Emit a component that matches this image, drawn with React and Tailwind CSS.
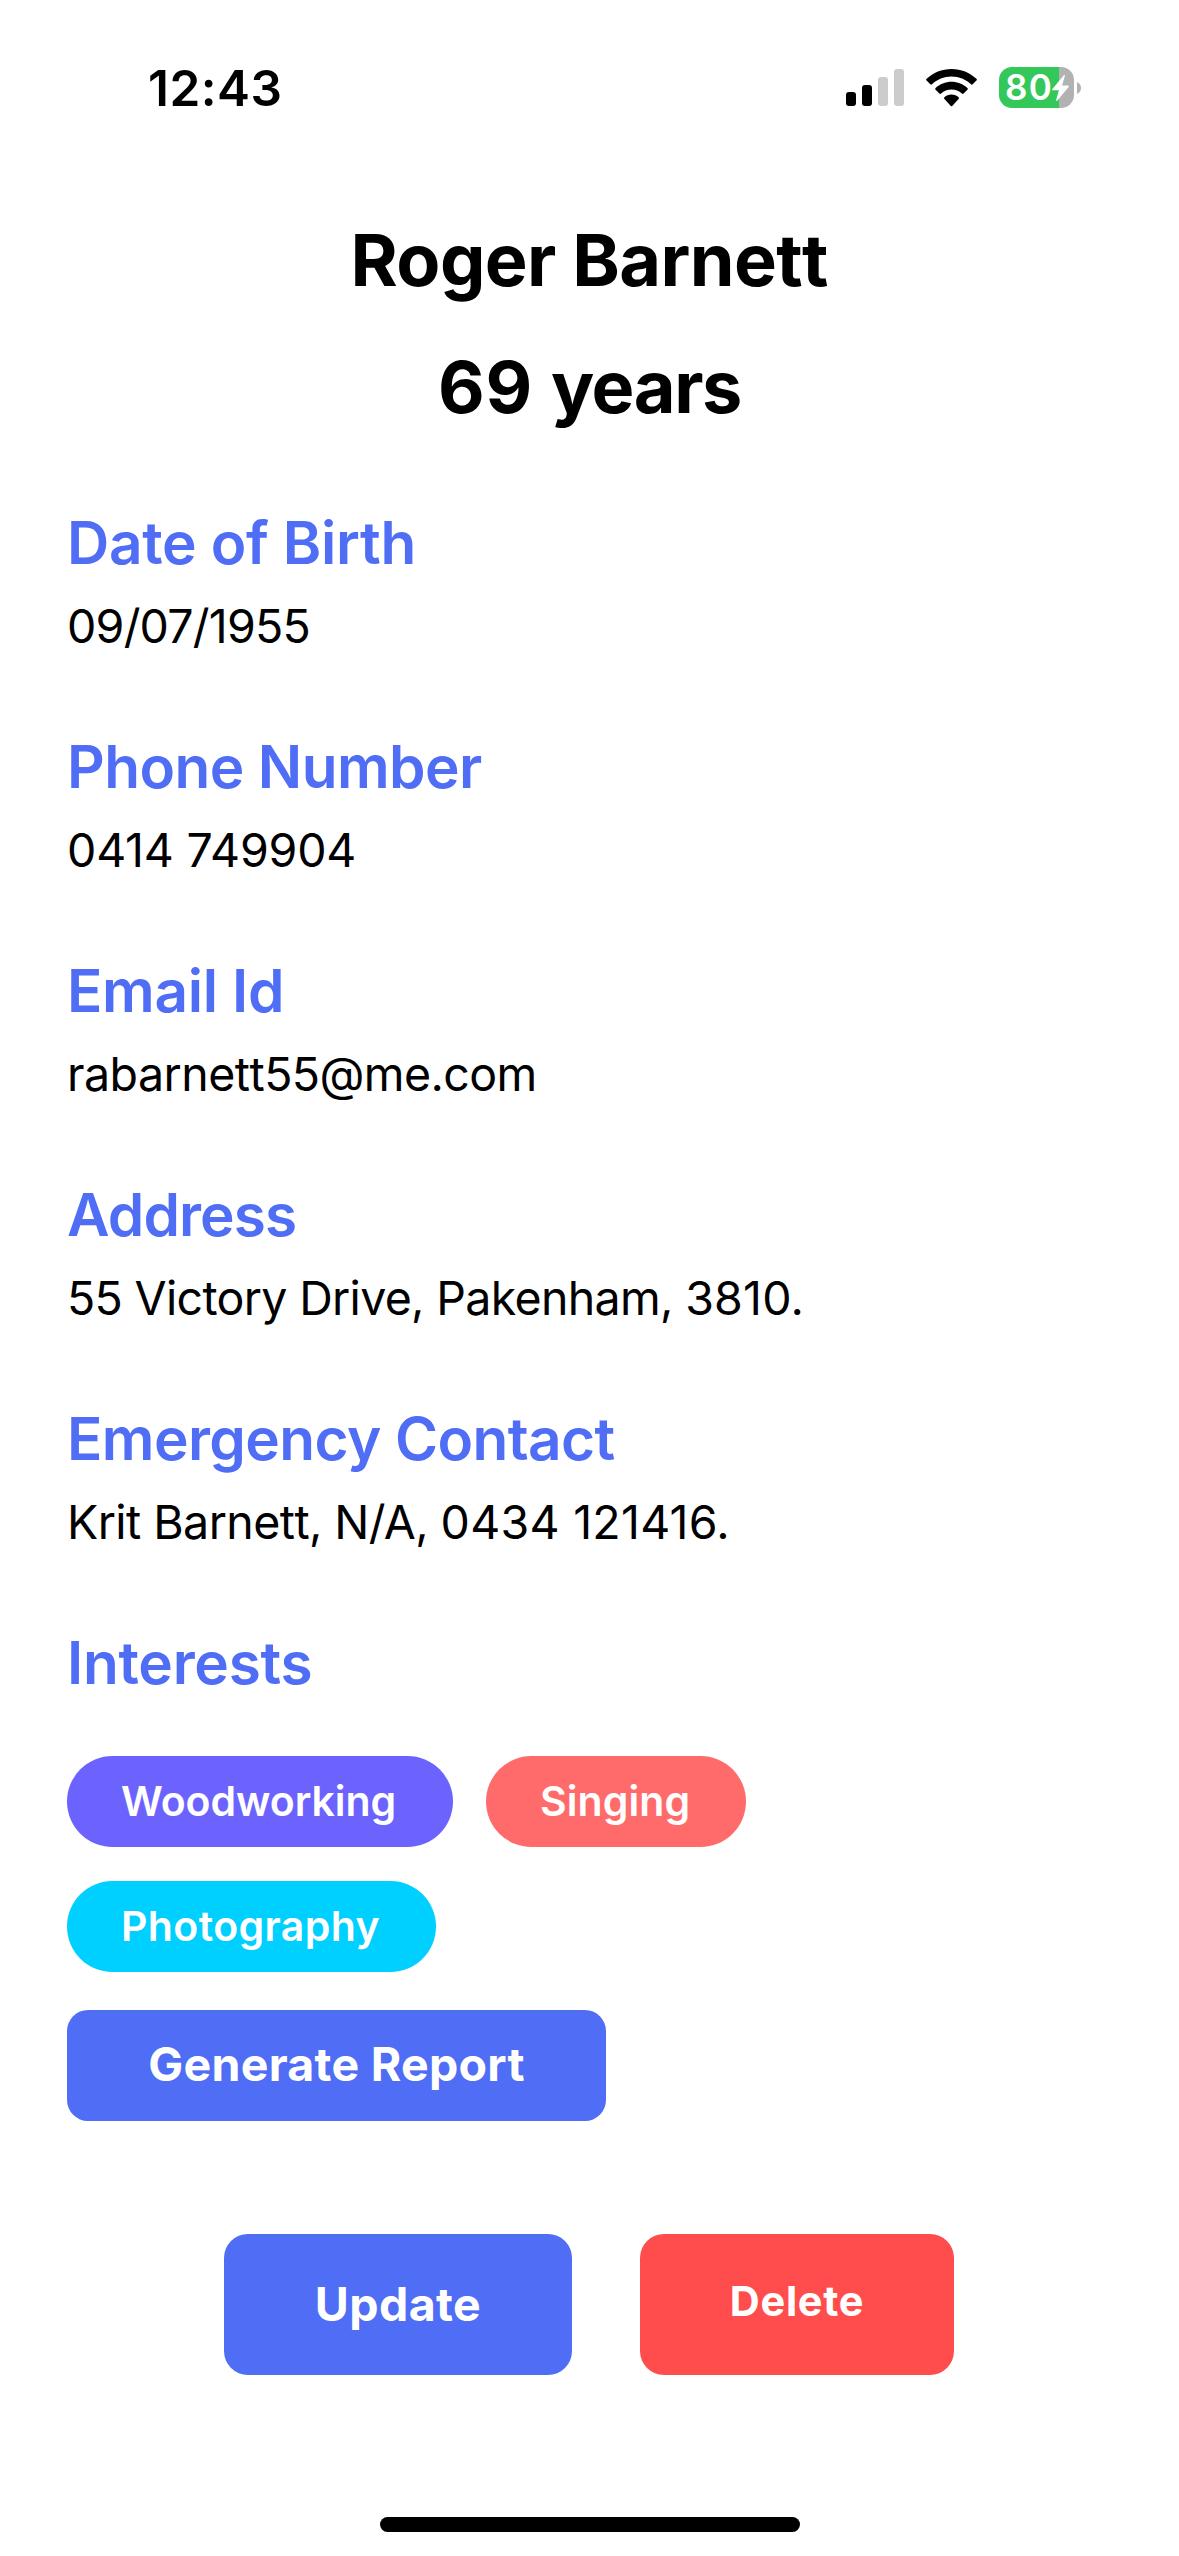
const details = [
  { label: 'Date of Birth', labelSpacing: 'tracking-[-0.31px]', value: [['09/07/1955', 'tracking-[-0.77px]']] },
  { label: 'Phone Number', labelSpacing: 'tracking-[-0.58px]', value: [['0414 749904', 'tracking-[-0.18px]']] },
  { label: 'Email Id', labelSpacing: 'tracking-[-0.32px]', value: [['rabarnet', 'tracking-[-0.52px]'], ['t55@me.com', 'tracking-[-0.6px]']] },
  { label: 'Address', labelSpacing: 'tracking-[-0.89px]', value: [['55 Victory Drive, Pakenham, ', 'tracking-[-0.68px]'], ['3810.', 'tracking-[0.2px]']] },
  { label: 'Emergency Contact', labelSpacing: 'tracking-[-0.58px]', value: [['Krit Barnet', 'tracking-[-0.56px]'], ['t, N/A, ', 'tracking-[-0.6px]'], ['0434 121416.', 'tracking-[0.28px]']] },
];

const interests = [
  { name: 'Woodworking', style: 'w-[386px] bg-[#6c63ff] tracking-[-0.06px]' },
  { name: 'Singing', style: 'w-[260px] bg-[#ff6b6b] tracking-[0.1px]' },
  { name: 'Photography', style: 'w-[369px] bg-[#00d0ff] tracking-[0.39px]' },
];

function SignalIcon() {
  return (
    <svg className="h-[37px] w-[58px]" viewBox="0 0 58 37">
      <rect x="0" y="23" width="10" height="14" rx="3" fill="#000" />
      <rect x="16" y="16" width="10" height="21" rx="3" fill="#000" />
      <rect x="32" y="8" width="10" height="29" rx="3" fill="#ccc" />
      <rect x="48" y="0" width="10" height="37" rx="3" fill="#ccc" />
    </svg>
  );
}

function WifiIcon() {
  return (
    <svg className="h-[38px] w-[51px]" viewBox="0 0 51 38">
      <path d="M25.5 0C15.9 0 7.1 3.7.6 9.8a1.2 1.2 0 0 0 0 1.8l3.7 3.7a1.2 1.2 0 0 0 1.7 0C11.1 10.4 18 7.5 25.5 7.5s14.400 2.900 19.500 7.800a1.200 1.200 0 0 0 1.700 0l3.700-3.700a1.200 1.200 0 0 0 0-1.800C43.900 3.700 35.100 0 25.500 0z" />
      <path d="M25.5 12.8c-6.100 0-11.700 2.400-15.900 6.200a1.200 1.200 0 0 0 0 1.800l3.800 3.700a1.200 1.200 0 0 0 1.700 0c2.800-2.500 6.400-4 10.400-4s7.600 1.500 10.400 4a1.200 1.200 0 0 0 1.700 0l3.800-3.700a1.200 1.200 0 0 0 0-1.800c-4.200-3.800-9.800-6.200-15.900-6.200z" />
      <path d="M25.5 25.6c-2.700 0-5.200 1-7.100 2.600a1.200 1.200 0 0 0 0 1.700l6.200 6.900a1.200 1.200 0 0 0 1.800 0l6.200-6.900a1.200 1.200 0 0 0 0-1.700c-1.900-1.600-4.400-2.600-7.100-2.600z" />
    </svg>
  );
}

function Battery() {
  return (
    <div className="flex items-center">
      <div className="flex h-[41px] w-[75px] items-center overflow-hidden rounded-[13px] bg-[linear-gradient(to_right,#34c759_60px,#b2b2b2_60px)] pl-[6px]">
        <span className="w-[47px] text-[35px] leading-[41px] font-semibold tracking-[1.4px] text-white">80</span>
        <svg className="h-[26px] w-[17px] shrink-0" viewBox="0 0 17 26">
          <path d="M11.6.4.4 14c-.5.7-.2 1.300.5 1.300h6L4.200 24.800c-.3 1.100.5 1.500 1.200.7L16.600 11.900c.5-.7.2-1.300-.5-1.300H10.100l2.800-9.500c.2-1-.7-1.500-1.300-.7z" fill="#fff" />
        </svg>
      </div>
      <svg className="ml-[3px] h-[12px] w-[4px]" viewBox="0 0 4 12">
        <path d="M0 0c2.400 1 4 3.300 4 6s-1.600 5-4 6z" fill="#b2b2b2" />
      </svg>
    </div>
  );
}

export default function App() {
  return (
    <div className="flex h-[2556px] w-[1179px] flex-col bg-white font-['Inter','Liberation_Sans',sans-serif] text-black">
      <header className="flex h-[175px] items-center justify-between pr-[98px] pl-[148px]">
        <span className="text-[49.5px] leading-[60px] font-semibold tracking-[0.5px]">12:43</span>
        <div className="flex items-center">
          <SignalIcon />
          <div className="ml-[22px]"><WifiIcon /></div>
          <div className="ml-[22px]"><Battery /></div>
        </div>
      </header>

      <main className="flex flex-1 flex-col pt-[37px]">
        <h1 className="text-center text-[72px] leading-[96px] font-bold tracking-[-0.6px]">
          Roger Barnet<span className="tracking-normal">t</span>
        </h1>
        <h2 className="mt-[31px] text-center text-[72px] leading-[96px] font-bold tracking-[-1.4px]">
          <span className="tracking-[0.8px]">69 </span>years
        </h2>

        <div className="mt-[72px] flex flex-col gap-[76px] px-[67px]">
          {details.map((d) => (
            <section key={d.label}>
              <h3 className={`text-[58.5px] leading-[72px] font-semibold text-[#4f6df5] ${d.labelSpacing}`}>{d.label}</h3>
              <p className="mt-[18px] text-[46.5px] leading-[58px]">
                {d.value.map(([text, spacing]) => (
                  <span key={text} className={spacing}>{text}</span>
                ))}
              </p>
            </section>
          ))}
          <section>
            <h3 className="text-[58.5px] leading-[72px] font-semibold tracking-[-0.25px] text-[#4f6df5]">Interests</h3>
            <div className="mt-[57px] flex w-[760px] flex-wrap gap-x-[33px] gap-y-[34px]">
              {interests.map((i) => (
                <span key={i.name} className={`h-[91px] rounded-full pl-[54px] text-[41px] leading-[91px] font-semibold whitespace-nowrap text-white ${i.style}`}>
                  {i.name}
                </span>
              ))}
            </div>
            <button className="mt-[38px] flex h-[111px] w-[539px] items-center justify-center rounded-[21px] bg-[#4f6df5] pb-[3px] text-[46.5px] leading-[58px] font-bold tracking-[0.28px] text-white">
              Generate Report
            </button>
          </section>
        </div>

        <div className="mt-[113px] flex gap-[68px] pl-[224px]">
          <button className="h-[141px] w-[348px] rounded-[24px] bg-[#4f6df5] pb-[2px] text-[46.5px] leading-[58px] font-bold tracking-[0.4px] text-white">Update</button>
          <button className="h-[141px] w-[314px] rounded-[24px] bg-[#ff4d4d] pb-[8px] text-[41.5px] leading-[50px] font-bold tracking-[0.7px] text-white">Delete</button>
        </div>
      </main>

      <div className="mx-auto mb-[24px] h-[15px] w-[420px] rounded-full bg-black" />
    </div>
  );
}
